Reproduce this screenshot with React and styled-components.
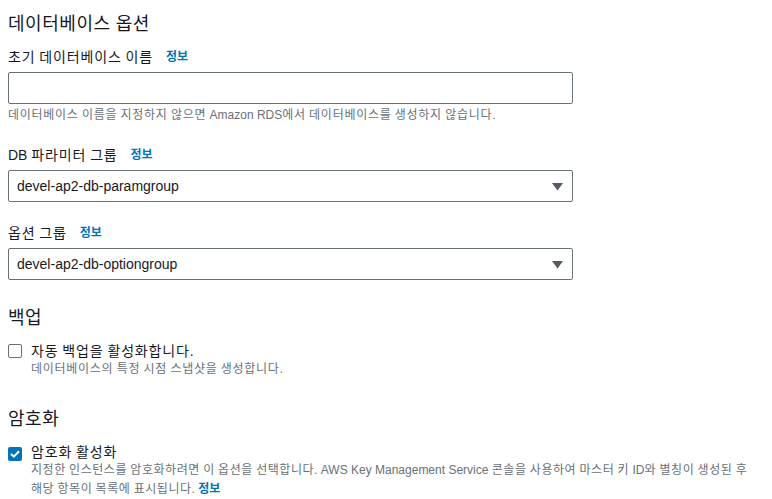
import React, { useState } from "react";
import styled, { createGlobalStyle } from "styled-components";

const GlobalStyle = createGlobalStyle`
  html, body {
    margin: 0;
    padding: 0;
    background: #ffffff;
  }
  body {
    font-family: "Liberation Sans", "Noto Sans CJK KR", Arial, sans-serif;
    color: #16191f;
    word-break: keep-all;
  }
`;

const Han = styled.span`
  letter-spacing: ${(p) => p.$ls || 0.06}em;
`;

function ko(text, ls) {
  return text.split(/([\uAC00-\uD7A3]+)/).map((part, i) =>
    /[\uAC00-\uD7A3]/.test(part) ? (
      <Han key={i} $ls={ls}>
        {part}
      </Han>
    ) : (
      part
    )
  );
}

const Page = styled.div`
  width: 772px;
  box-sizing: border-box;
  padding: 12px 0 0 8px;
`;

const Section = styled.section`
  display: flex;
  flex-direction: column;
  margin-bottom: ${(p) => p.$gap || 0}px;
`;

const Heading = styled.h2`
  margin: 0 0 ${(p) => p.$after || 11}px;
  font-size: 18px;
  line-height: 24px;
  font-weight: 400;
  color: #16191f;
`;

const Field = styled.div`
  display: flex;
  flex-direction: column;
  margin-bottom: ${(p) => p.$after || 0}px;
`;

const Label = styled.div`
  display: flex;
  align-items: center;
  gap: 13px;
  font-size: 14px;
  line-height: 20px;
  margin-bottom: 5px;
`;

const InfoLink = styled.a`
  font-size: 12px;
  font-weight: 700;
  color: #0073bb;
  text-decoration: none;
  cursor: pointer;
`;

const TextInput = styled.input`
  box-sizing: border-box;
  width: 565px;
  height: 32px;
  margin: 0;
  padding: 0 8px;
  border: 1px solid #687078;
  border-radius: 2px;
  font-family: inherit;
  font-size: 14px;
  color: #16191f;
  outline: none;
`;

const Hint = styled.div`
  font-size: 12px;
  line-height: ${(p) => p.$lh || 16}px;
  color: #687078;
  margin-top: ${(p) => p.$top || 0}px;
`;

const SelectBox = styled.div`
  position: relative;
  box-sizing: border-box;
  width: 565px;
  height: 32px;
  display: flex;
  align-items: center;
  padding: 0 36px 0 8px;
  border: 1px solid #687078;
  border-radius: 2px;
  font-size: 14px;
  color: #16191f;
  cursor: pointer;
`;

const Caret = styled.svg`
  position: absolute;
  right: 9px;
  top: 12px;
`;

const CheckRow = styled.label`
  display: grid;
  grid-template-columns: 14px 1fr;
  column-gap: 9px;
  cursor: pointer;
`;

const Box = styled.span`
  box-sizing: border-box;
  width: 14px;
  height: 14px;
  margin-top: 3px;
  border-radius: 2px;
  border: ${(p) => (p.$checked ? "none" : "1px solid #687078")};
  background: ${(p) => (p.$checked ? "#0073bb" : "#ffffff")};
  display: flex;
  align-items: center;
  justify-content: center;
`;

const CheckText = styled.div`
  display: flex;
  flex-direction: column;
`;

const CheckLabel = styled.span`
  font-size: 14px;
  line-height: ${(p) => p.$lh || 20}px;
  color: #16191f;
`;

function Select({ value }) {
  return (
    <SelectBox>
      {value}
      <Caret width="11" height="8" viewBox="0 0 11 8">
        <path d="M0 0 H11 L5.5 7.5 Z" fill="#545b64" />
      </Caret>
    </SelectBox>
  );
}

function Checkbox({ checked, onToggle, label, labelLh, children }) {
  return (
    <CheckRow onClick={onToggle}>
      <Box $checked={checked}>
        {checked && (
          <svg width="10" height="8" viewBox="0 0 10 8">
            <path
              d="M1 4 L3.8 6.6 L9 1.2"
              fill="none"
              stroke="#fff"
              strokeWidth="2"
            />
          </svg>
        )}
      </Box>
      <CheckText>
        <CheckLabel $lh={labelLh}>{ko(label)}</CheckLabel>
        {children}
      </CheckText>
    </CheckRow>
  );
}

export default function App() {
  const [backup, setBackup] = useState(false);
  const [encrypt, setEncrypt] = useState(true);

  return (
    <Page>
      <GlobalStyle />
      <Section $gap={26}>
        <Heading>{ko("데이터베이스 옵션", 0.03)}</Heading>
        <Field $after={22}>
          <Label>
            <span>{ko("초기 데이터베이스 이름")}</span>
            <InfoLink>정보</InfoLink>
          </Label>
          <TextInput type="text" />
          <Hint $top={3}>
            {ko(
              "데이터베이스 이름을 지정하지 않으면 Amazon RDS에서 데이터베이스를 생성하지 않습니다.",
              0.06
            )}
          </Hint>
        </Field>
        <Field $after={21}>
          <Label>
            <span>{ko("DB 파라미터 그룹")}</span>
            <InfoLink>정보</InfoLink>
          </Label>
          <Select value="devel-ap2-db-paramgroup" />
        </Field>
        <Field>
          <Label>
            <span>{ko("옵션 그룹")}</span>
            <InfoLink>정보</InfoLink>
          </Label>
          <Select value="devel-ap2-db-optiongroup" />
        </Field>
      </Section>

      <Section $gap={30}>
        <Heading>{ko("백업", 0.03)}</Heading>
        <Checkbox
          checked={backup}
          onToggle={() => setBackup(!backup)}
          label="자동 백업을 활성화합니다."
        >
          <Hint>{ko("데이터베이스의 특정 시점 스냅샷을 생성합니다.", 0.06)}</Hint>
        </Checkbox>
      </Section>

      <Section>
        <Heading $after={13}>{ko("암호화", 0.03)}</Heading>
        <Checkbox
          checked={encrypt}
          onToggle={() => setEncrypt(!encrypt)}
          label="암호화 활성화"
          labelLh={17}
        >
          <Hint $lh={19}>
            {ko(
              "지정한 인스턴스를 암호화하려면 이 옵션을 선택합니다. AWS Key Management Service 콘솔을 사용하여 마스터 키 ID와 별칭이 생성된 후 해당 항목이 목록에 표시됩니다.",
              0.045
            )}{" "}
            <InfoLink>정보</InfoLink>
          </Hint>
        </Checkbox>
      </Section>
    </Page>
  );
}
